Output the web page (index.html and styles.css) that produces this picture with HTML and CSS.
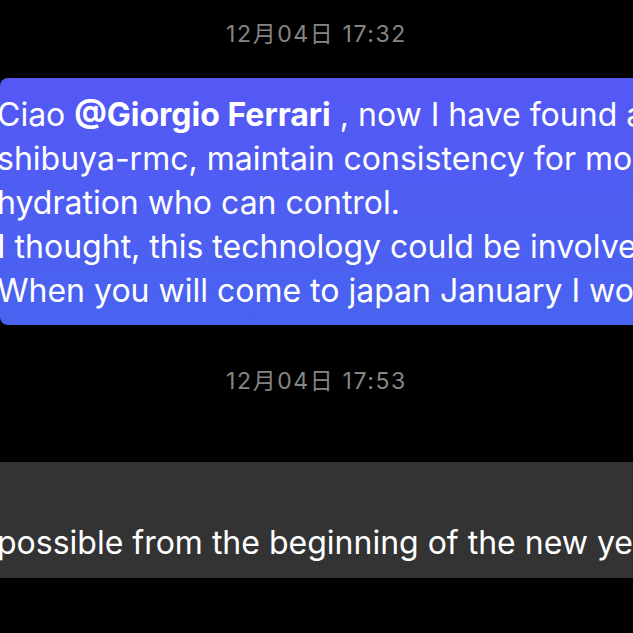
FILE: index.html
```html
<!DOCTYPE html>
<html>
	<head>
		<meta charset="utf-8">
		<title>聊天</title>
		<link rel="stylesheet" href="styles.css">
	</head>
	<body>
		<div class="chat">
			<div class="time">12月04日 17:32</div>
			<div class="bubble bubble-blue">
				<p class="msg">Ciao <b>@Giorgio Ferrari</b> , now I have found a way<br>shibuya-rmc, maintain consistency for more<br>hydration who can control.<br>I thought, this technology could be involved<br>When you will come to japan January I would</p>
			</div>
			<div class="time time-2">12月04日 17:53</div>
			<div class="bubble bubble-gray">
				<p class="msg">possible from the beginning of the new year</p>
			</div>
		</div>
	</body>
</html>
```

FILE: styles.css
```css
*{
	margin: 0px;
	padding: 0px;
}
html, body{
	background-color: #000;
	overflow: hidden;
}
body{
	width: 633px;
	height: 633px;
	font-family: Inter, "Noto Sans CJK SC", sans-serif;
}
.chat{
	display: flex;
	flex-direction: column;
	padding-top: 20px;
}
.time{
	text-align: center;
	color: #858585;
	font-size: 23px;
	line-height: 28px;
	letter-spacing: 1.6px;
	margin-bottom: 30px;
}
.time-2{
	margin-top: 42px;
	margin-bottom: 67px;
}
.bubble{
	border-radius: 8px 0 0 8px;
	white-space: nowrap;
	overflow: hidden;
}
.bubble-blue{
	background: linear-gradient(#5558f5, #4863f0);
	padding: 15px 0 12px 0;
}
.bubble-gray{
	background-color: #333333;
	border-radius: 0;
	padding: 59px 0 13px 0;
}
.msg{
	color: #fff;
	font-size: 32px;
	line-height: 44px;
	margin-left: -3px;
}
.msg b{
	font-weight: 700;
}
```
